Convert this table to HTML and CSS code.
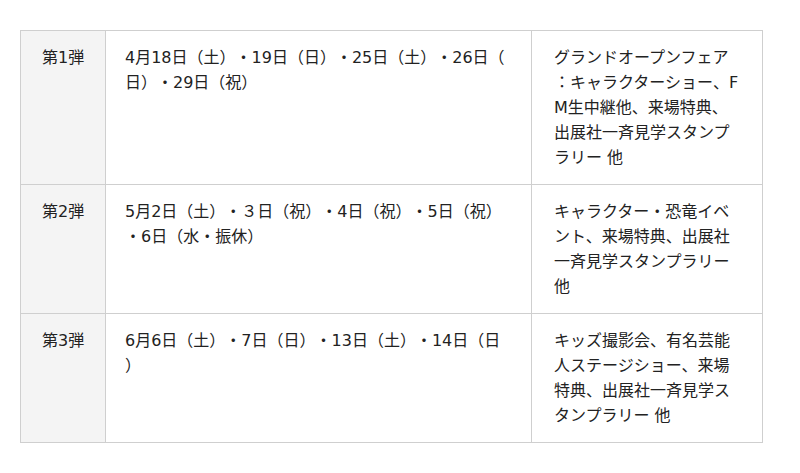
FILE: index.html
```html
<!DOCTYPE html>
<html lang="ja">
<head>
<meta charset="utf-8">
<link rel="stylesheet" href="styles.css">
</head>
<body>
<div class="wrap">
<table class="schedule">
  <colgroup>
    <col class="c-name">
    <col class="c-date">
    <col class="c-event">
  </colgroup>
  <tbody>
    <tr>
      <th>第1弾</th>
      <td>4月18日（土）・19日（日）・25日（土）・26日（日）・29日（祝）</td>
      <td>グランドオープンフェア：キャラクターショー、FM生中継他、来場特典、<br>出展社一斉見学スタンプラリー 他</td>
    </tr>
    <tr>
      <th>第2弾</th>
      <td>5月2日（土）・３日（祝）・4日（祝）・5日（祝）・6日（水・振休）</td>
      <td>キャラクター・恐竜イベント、来場特典、出展社一斉見学スタンプラリー 他</td>
    </tr>
    <tr>
      <th>第3弾</th>
      <td>6月6日（土）・7日（日）・13日（土）・14日（日）</td>
      <td>キッズ撮影会、有名芸能人ステージショー、来場特典、出展社一斉見学スタンプラリー 他</td>
    </tr>
  </tbody>
</table>
</div>
</body>
</html>
```

FILE: styles.css
```css
html, body {
  margin: 0;
  padding: 0;
  background: #fff;
}

.wrap {
  padding: 30px 38px 0 20px;
}

.schedule {
  width: 742px;
  border-collapse: collapse;
  table-layout: fixed;
  font-family: "DejaVu Sans", "Noto Sans CJK JP", sans-serif;
  font-size: 16px;
  line-height: 25px;
  color: #222;
  text-spacing-trim: space-all;
}

.c-name { width: 85px; }
.c-date { width: 426px; }
.c-event { width: 231px; }

.schedule th,
.schedule td {
  border: 1px solid #cfcfcf;
  padding: 14px 20px 14px 19px;
  vertical-align: top;
  text-align: left;
  font-weight: normal;
  line-break: anywhere;
}

.schedule th {
  background: #f4f4f4;
  padding-left: 21px;
}

.schedule td:last-child {
  padding-left: 22px;
  padding-right: 20px;
}
```
